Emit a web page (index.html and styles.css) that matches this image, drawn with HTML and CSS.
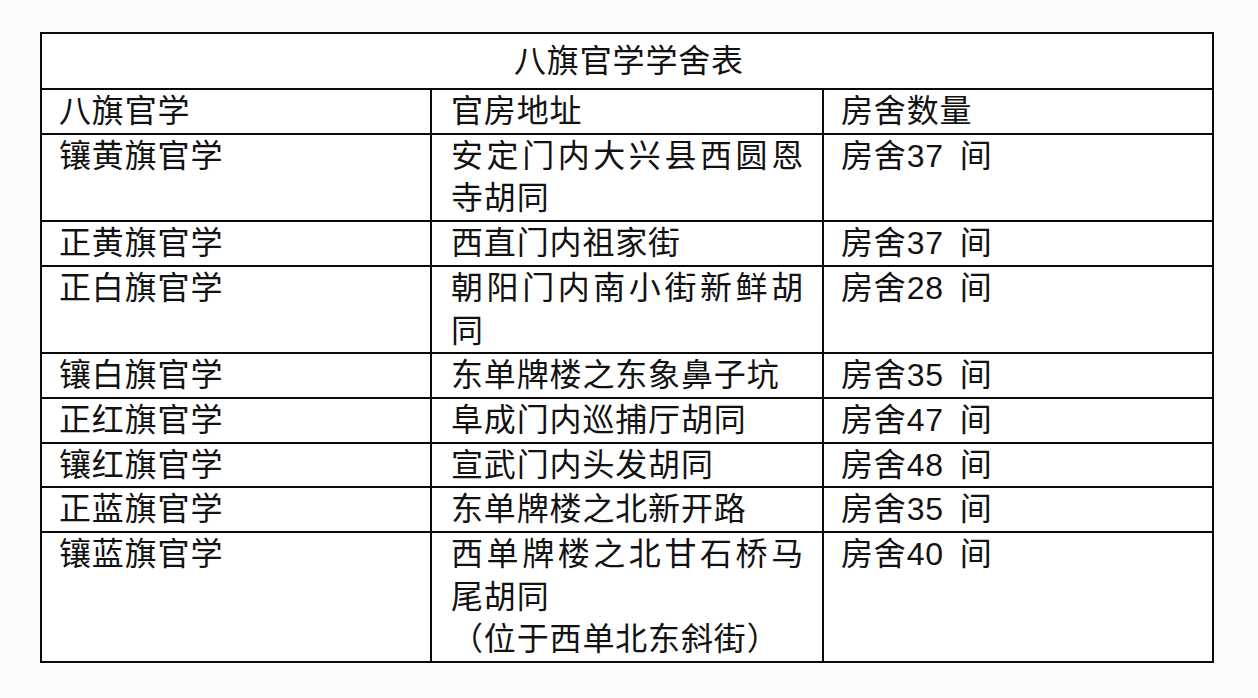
FILE: index.html
```html
<!DOCTYPE html>
<html lang="zh-CN">
<head>
<meta charset="utf-8">
<title>八旗官学学舍表</title>
<link rel="stylesheet" href="styles.css">
</head>
<body>
<div class="page">
  <div class="sheet">
    <div class="cell title">八旗官学学舍表</div>

    <div class="cell c1">八旗官学</div>
    <div class="cell c2">官房地址</div>
    <div class="cell c3">房舍数量</div>

    <div class="cell c1">镶黄旗官学</div>
    <div class="cell c2"><div class="jline">安定门内大兴县西圆恩</div><div>寺胡同</div></div>
    <div class="cell c3">房舍37 间</div>

    <div class="cell c1">正黄旗官学</div>
    <div class="cell c2">西直门内祖家街</div>
    <div class="cell c3">房舍37 间</div>

    <div class="cell c1">正白旗官学</div>
    <div class="cell c2"><div class="jline">朝阳门内南小街新鲜胡</div><div>同</div></div>
    <div class="cell c3">房舍28 间</div>

    <div class="cell c1">镶白旗官学</div>
    <div class="cell c2">东单牌楼之东象鼻子坑</div>
    <div class="cell c3">房舍35 间</div>

    <div class="cell c1">正红旗官学</div>
    <div class="cell c2">阜成门内巡捕厅胡同</div>
    <div class="cell c3">房舍47 间</div>

    <div class="cell c1">镶红旗官学</div>
    <div class="cell c2">宣武门内头发胡同</div>
    <div class="cell c3">房舍48 间</div>

    <div class="cell c1">正蓝旗官学</div>
    <div class="cell c2">东单牌楼之北新开路</div>
    <div class="cell c3">房舍35 间</div>

    <div class="cell c1">镶蓝旗官学</div>
    <div class="cell c2"><div class="jline">西单牌楼之北甘石桥马</div><div>尾胡同</div><div>（位于西单北东斜街）</div></div>
    <div class="cell c3">房舍40 间</div>
  </div>
</div>
</body>
</html>
```
FILE: styles.css
```css
html, body {
  margin: 0;
  padding: 0;
  background: #fbfbfc;
}

.page {
  width: 1258px;
  height: 698px;
  box-sizing: border-box;
  padding: 32px 0 0 40px;
}

.sheet {
  display: grid;
  grid-template-columns: 390px 392px 390px;
  width: 1174px;
  box-sizing: border-box;
  border-left: 2px solid #0a0a0a;
  border-top: 2px solid #0a0a0a;
  background: #ffffff;
  font-family: "Liberation Sans", "Noto Sans CJK SC", sans-serif;
  font-size: 32px;
  line-height: 42.7px;
  letter-spacing: 0.85px;
  color: #121212;
}

.cell {
  box-sizing: border-box;
  border-right: 2px solid #0a0a0a;
  border-bottom: 2px solid #0a0a0a;
  white-space: nowrap;
}

.title {
  grid-column: 1 / -1;
  text-align: center;
  line-height: 54px;
  padding-left: 4px;
}

.c1 {
  padding-left: 17px;
}

.c2 {
  padding-left: 19px;
}

.c3 {
  padding-left: 17px;
  word-spacing: 6px;
}

.jline {
  width: 353px;
  text-align: justify;
  text-align-last: justify;
}
```
